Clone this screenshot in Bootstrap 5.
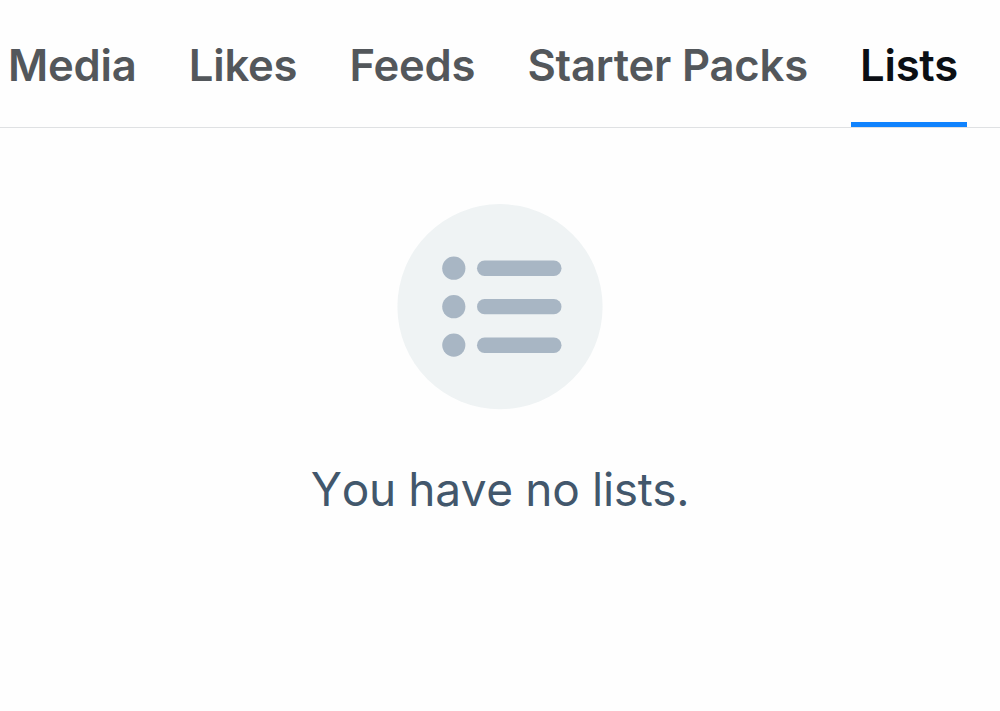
<!DOCTYPE html>
<html lang="en">
<head>
  <meta charset="UTF-8" />
  <meta name="viewport" content="width=device-width, initial-scale=1.0"/>
  <link href="https://cdn.jsdelivr.net/npm/bootstrap@5.3.5/dist/css/bootstrap.min.css" rel="stylesheet" />
  <script src="https://cdn.jsdelivr.net/npm/bootstrap@5.3.5/dist/js/bootstrap.bundle.min.js" defer></script>
  <title>Lists</title>
  <style>
    body {
      font-family: Inter, sans-serif;
      font-optical-sizing: auto;
      background-color: #fefefe;
      overflow: hidden;
    }

    .profile-tabs {
      height: 128px;
      margin-left: -1px;
      padding: 0 33px 0 0;
      border-bottom: 1px solid #dfe1e3;
    }

    .profile-tabs .nav-link {
      display: flex;
      height: 127px;
      padding: 10px 9px 0;
      align-items: center;
      border-bottom: 5px solid transparent;
      color: #53575b;
      font-size: 43.6px;
      font-weight: 600;
      letter-spacing: -0.2px;
      line-height: 1;
      white-space: nowrap;
    }

    .profile-tabs .nav-link.active {
      color: #0b0f14;
      border-bottom-color: #1083fe;
    }

    .empty-state {
      padding-top: 76px;
    }

    .empty-text {
      margin-top: 51px;
      color: #42576c;
      font-size: 46px;
      font-kerning: none;
      letter-spacing: -0.33px;
      line-height: 56px;
    }
  </style>
</head>
<body>

  <ul class="nav profile-tabs flex-nowrap justify-content-between">
    <li class="nav-item"><a class="nav-link" href="#">Media</a></li>
    <li class="nav-item"><a class="nav-link" href="#">Likes</a></li>
    <li class="nav-item"><a class="nav-link" href="#">Feeds</a></li>
    <li class="nav-item"><a class="nav-link" href="#">Starter Packs</a></li>
    <li class="nav-item"><a class="nav-link active" href="#" aria-current="page">Lists</a></li>
  </ul>

  <main class="empty-state d-flex flex-column align-items-center">
    <svg class="d-block" width="206" height="206" viewBox="0 0 206 206" fill="#a8b6c4" aria-hidden="true">
      <circle cx="103" cy="102.7" r="102.6" fill="#eff3f4"/>
      <circle cx="56.8" cy="64.2" r="11.6"/>
      <circle cx="56.8" cy="102.7" r="11.6"/>
      <circle cx="56.8" cy="141.1" r="11.6"/>
      <rect x="80" y="56.6" width="84.5" height="15.3" rx="7.65"/>
      <rect x="80" y="95" width="84.5" height="15.3" rx="7.65"/>
      <rect x="80" y="133.6" width="84.5" height="15.3" rx="7.65"/>
    </svg>
    <p class="empty-text mb-0">You have no lists.</p>
  </main>

</body>
</html>
